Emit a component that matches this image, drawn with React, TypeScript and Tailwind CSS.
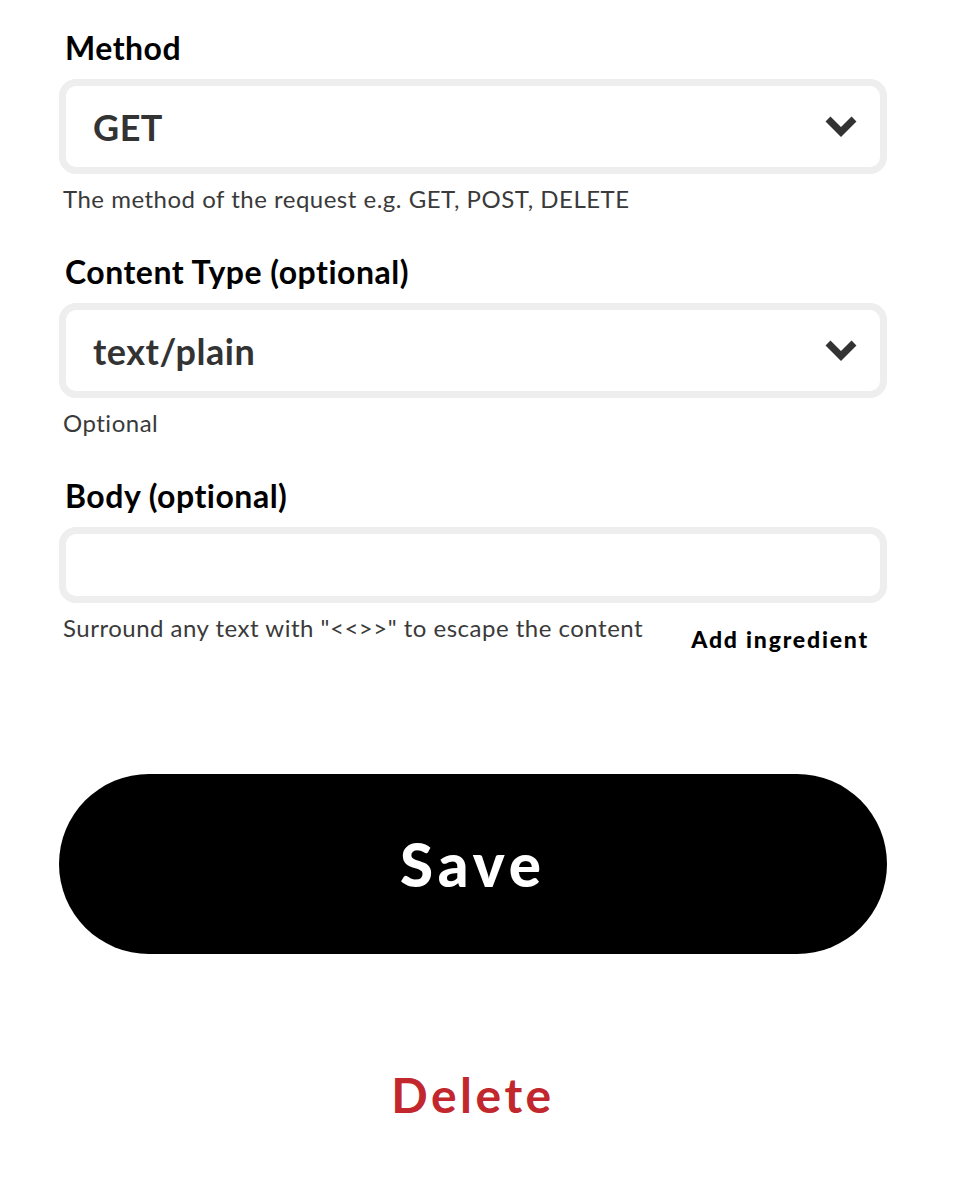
import React from "react";

const font = { fontFamily: "Lato, 'Noto Sans', sans-serif" };

function Chevron() {
  return (
    <svg width="34" height="25" viewBox="0 0 34 25" className="shrink-0">
      <polyline
        points="4,5 17,18 30,5"
        fill="none"
        stroke="#333333"
        strokeWidth="7"
        strokeLinejoin="miter"
      />
    </svg>
  );
}

function Label({ children }: { children: React.ReactNode }) {
  return (
    <div className="ml-[6px] mb-[11px] h-[40px] text-[32px] leading-[40px] font-bold tracking-[0.5px] text-black">
      {children}
    </div>
  );
}

function Select({ value }: { value: string }) {
  return (
    <div className="flex h-[95px] items-center justify-between rounded-[17px] border-[7px] border-[#eeeeee] bg-white pl-[27px] pr-[22px]">
      <span className="text-[36px] font-bold tracking-[0.5px] text-[#333333]">{value}</span>
      <Chevron />
    </div>
  );
}

function Helper({ children }: { children: React.ReactNode }) {
  return (
    <div className="ml-[4px] mt-[10px] h-[30px] text-[24px] leading-[30px] tracking-[0.5px] text-[#3a3a3a]">
      {children}
    </div>
  );
}

export default function App() {
  return (
    <div className="min-h-[1178px] bg-white pt-[28px]" style={font}>
      <div className="ml-[59px] w-[828px]">
        <div className="mb-[38px]">
          <Label>Method</Label>
          <Select value="GET" />
          <Helper>The method of the request e.g. GET, POST, DELETE</Helper>
        </div>

        <div className="mb-[38px]">
          <Label>Content Type (optional)</Label>
          <Select value="text/plain" />
          <Helper>Optional</Helper>
        </div>

        <div>
          <Label>Body (optional)</Label>
          <div className="h-[76px] rounded-[17px] border-[7px] border-[#eeeeee] bg-white" />
          <div className="flex h-[40px] items-start justify-between">
            <Helper>Surround any text with "&lt;&lt;&gt;&gt;" to escape the content</Helper>
            <button className="mr-[18px] mt-[21px] text-[23px] leading-[30px] font-black tracking-[1.8px] text-black">
              Add ingredient
            </button>
          </div>
        </div>

        <button className="mt-[131px] flex h-[180px] w-full items-center justify-center rounded-full bg-black text-[60px] font-black tracking-[5px] text-white">
          Save
        </button>

        <div className="mt-[111px] flex justify-center">
          <button className="h-[60px] text-[48px] leading-[60px] font-bold tracking-[3.5px] text-[#c1272d]">
            Delete
          </button>
        </div>
      </div>
    </div>
  );
}
